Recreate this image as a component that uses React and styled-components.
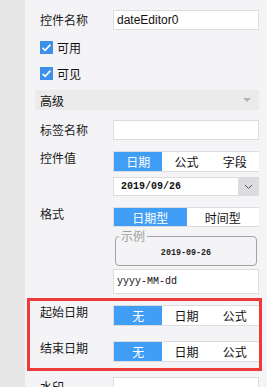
import React from "react";
import styled, { createGlobalStyle } from "styled-components";

const Global = createGlobalStyle`
  html, body { margin: 0; padding: 0; background: #f4f4f6; }
  body { font-family: "Noto Sans CJK SC", "Liberation Sans", sans-serif; font-size: 12px; color: #111; }
`;

const Page = styled.div`
  display: flex;
  width: 267px;
  height: 387px;
  overflow: hidden;
  background: #f4f4f6;
`;

const Strip = styled.div`
  width: 25px;
  flex: none;
  background: #e7e7e7;
`;

const Content = styled.div`
  flex: 1;
  display: flex;
  flex-direction: column;
  padding: 10px 8px 0 10px;
  & > * { flex: none; }
`;

const Row = styled.div`
  display: grid;
  grid-template-columns: 78px 1fr;
  align-items: ${(p) => (p.$top ? "start" : "center")};
  margin-top: ${(p) => p.$mt || 0}px;
`;

const Label = styled.div`
  padding-left: 5px;
  font-size: 12px;
  line-height: 14px;
  white-space: nowrap;
  color: #1a1a1a;
`;

const Stack = styled.div`
  display: flex;
  flex-direction: column;
  gap: ${(p) => p.$gap || 0}px;
  & > * { flex: none; }
`;

const Input = styled.div`
  box-sizing: border-box;
  height: ${(p) => p.$h || 20}px;
  margin-top: ${(p) => p.$mt || 0}px;
  background: #fff;
  border: 1px solid #dcdcdf;
  display: flex;
  align-items: center;
  padding-left: ${(p) => p.$pl || 3}px;
  font-family: ${(p) => (p.$mono ? '"Liberation Mono", monospace' : '"Liberation Sans", sans-serif')};
  font-size: ${(p) => p.$fs || 12}px;
  color: #111;
`;

const CheckRow = styled.div`
  display: flex;
  align-items: center;
  gap: 4px;
  height: 26px;
  padding-left: 5px;
  font-size: 12px;
  margin-top: ${(p) => p.$mt || 0}px;
`;

const Section = styled.div`
  box-sizing: border-box;
  height: 20px;
  margin-top: 4px;
  background: #ebebeb;
  display: flex;
  align-items: center;
  justify-content: space-between;
  padding: 0 8px 0 5px;
  font-size: 12px;
`;

const Caret = styled.span`
  width: 0;
  height: 0;
  border-left: 4px solid transparent;
  border-right: 4px solid transparent;
  border-top: 4px solid #b4b4b4;
`;

const Segs = styled.div`
  box-sizing: border-box;
  height: ${(p) => p.$h || 21}px;
  display: grid;
  grid-template-columns: repeat(${(p) => p.$n}, 1fr);
  border-top: 1px solid #dcdcdf;
  border-bottom: 1px solid #dcdcdf;
  border-left: 1px solid #dcdcdf;
  background: #fff;
`;

const Seg = styled.div`
  display: flex;
  align-items: center;
  justify-content: center;
  font-size: 12px;
  background: ${(p) => (p.$on ? "#419ef7" : "#fff")};
  color: ${(p) => (p.$on ? "#fff" : "#111")};
`;

const Select = styled.div`
  box-sizing: border-box;
  height: 19px;
  display: flex;
  background: #fff;
  border: 1px solid #dcdcdf;
`;

const SelectText = styled.div`
  flex: 1;
  display: flex;
  align-items: center;
  padding-left: 7px;
  font-family: "Liberation Mono", monospace;
  font-size: 10px;
  font-weight: bold;
  color: #111;
`;

const SelectBtn = styled.div`
  width: 20px;
  background: #dcdcdf;
  display: flex;
  align-items: center;
  justify-content: center;
`;

const Sample = styled.fieldset`
  margin: 3px 2px 0 2px;
  padding: 4px 0 5px;
  border: 1px solid #a2a2a2;
  border-radius: 4px;
  min-width: 0;
`;

const Legend = styled.legend`
  margin-left: 3px;
  padding: 0 2px;
  font-size: 12px;
  line-height: 12px;
  color: #a0a0a0;
`;

const SampleText = styled.div`
  text-align: center;
  line-height: 14px;
  font-family: "Liberation Mono", monospace;
  font-size: 8.4px;
  font-weight: bold;
  color: #222;
`;

const Marked = styled.div`
  position: relative;
  display: flex;
  flex-direction: column;
  margin-top: 11px;
  &::after {
    content: "";
    position: absolute;
    left: -8px;
    right: -3px;
    top: -7px;
    bottom: -9px;
    border: 3px solid #ef3a3a;
    pointer-events: none;
  }
`;

const Check = () => (
  <svg width="13" height="13" viewBox="0 0 13 13">
    <rect width="13" height="13" fill="#3d90ea" />
    <path d="M2.6 6.8 L5.2 9.3 L10.4 3.6" fill="none" stroke="#fff" strokeWidth="1.6" />
  </svg>
);

const Chevron = () => (
  <svg width="9" height="6" viewBox="0 0 9 6">
    <path d="M1 1 L4.5 4.5 L8 1" fill="none" stroke="#555" strokeWidth="1" />
  </svg>
);

const SegGroup = ({ items, h }) => (
  <Segs $n={items.length} $h={h}>
    {items.map((t, i) => (
      <Seg key={t} $on={i === 0}>{t}</Seg>
    ))}
  </Segs>
);

export default function App() {
  return (
    <>
      <Global />
      <Page>
        <Strip />
        <Content>
          <Row>
            <Label>控件名称</Label>
            <Input>dateEditor0</Input>
          </Row>
          <CheckRow $mt={4}><Check />可用</CheckRow>
          <CheckRow><Check />可见</CheckRow>
          <Section>高级<Caret /></Section>
          <Row $mt={10}>
            <Label>标签名称</Label>
            <Input />
          </Row>
          <Row $top $mt={11}>
            <Label>控件值</Label>
            <Stack $gap={5}>
              <SegGroup items={["日期", "公式", "字段"]} />
              <Select>
                <SelectText>2019/09/26</SelectText>
                <SelectBtn><Chevron /></SelectBtn>
              </Select>
            </Stack>
          </Row>
          <Row $top $mt={11}>
            <Label>格式</Label>
            <Stack>
              <SegGroup items={["日期型", "时间型"]} h={20} />
              <Sample>
                <Legend>示例</Legend>
                <SampleText>2019-09-26</SampleText>
              </Sample>
              <Input $h={25} $mono $fs={10} $pl={3} $mt={3}>yyyy-MM-dd</Input>
            </Stack>
          </Row>
          <Marked>
            <Row $top>
              <Label>起始日期</Label>
              <SegGroup items={["无", "日期", "公式"]} />
            </Row>
            <Row $top $mt={15}>
              <Label>结束日期</Label>
              <SegGroup items={["无", "日期", "公式"]} />
            </Row>
          </Marked>
          <Row $mt={15}>
            <Label>水印</Label>
            <Input />
          </Row>
        </Content>
      </Page>
    </>
  );
}
